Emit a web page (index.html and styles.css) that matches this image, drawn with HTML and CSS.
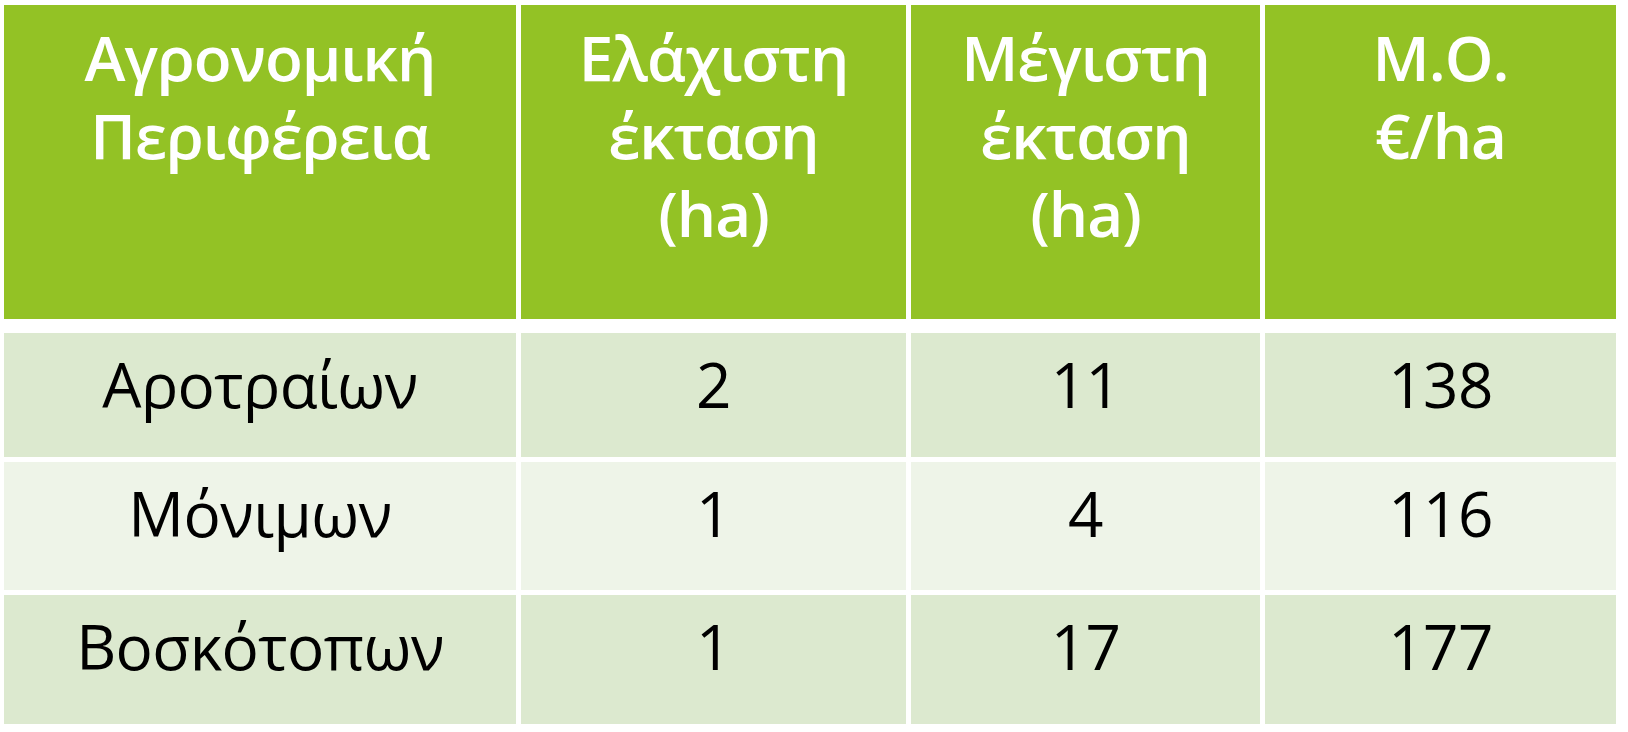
FILE: index.html
```html
<!DOCTYPE html>
<html lang="el">
<head>
<meta charset="utf-8">
<title>Πίνακας</title>
<link rel="stylesheet" href="styles.css">
</head>
<body>
<table class="data">
  <colgroup>
    <col class="c1"><col class="c2"><col class="c3"><col class="c4">
  </colgroup>
  <thead>
    <tr>
      <th>Αγρονομική<br>Περιφέρεια</th>
      <th>Ελάχιστη<br>έκταση<br>(ha)</th>
      <th>Μέγιστη<br>έκταση<br>(ha)</th>
      <th>Μ.Ο.<br>€/ha</th>
    </tr>
  </thead>
  <tbody>
    <tr class="band r1"><td>Αροτραίων</td><td>2</td><td>11</td><td>138</td></tr>
    <tr class="light r2"><td>Μόνιμων</td><td>1</td><td>4</td><td>116</td></tr>
    <tr class="band r3"><td>Βοσκότοπων</td><td>1</td><td>17</td><td>177</td></tr>
  </tbody>
</table>
</body>
</html>
```

FILE: styles.css
```css
html, body {
  margin: 0;
  padding: 0;
  background: #ffffff;
}
.data {
  border-collapse: separate;
  border-spacing: 5px;
  margin: 0 0 0 -1px;
  font-family: "Open Sans", "DejaVu Sans", sans-serif;
  table-layout: fixed;
}
.c1 { width: 512px; }
.c2 { width: 385px; }
.c3 { width: 349px; }
.c4 { width: 351px; }
.data th {
  background: #93c225;
  color: #ffffff;
  font-weight: 600;
  font-size: 62px;
  line-height: 78px;
  letter-spacing: -1px;
  height: 323px;
  box-sizing: border-box;
  vertical-align: top;
  text-align: center;
  padding: 13px 0 0 0;
  border-bottom: 9px solid #ffffff;
}
.data td {
  font-size: 62px;
  line-height: 78px;
  letter-spacing: -0.6px;
  color: #000000;
  text-align: center;
  vertical-align: top;
  padding: 12px 0 0 0;
  box-sizing: border-box;
}
.r1 td { height: 124px; }
.r2 td { height: 128px; }
.r3 td { height: 129px; }
.band td { background: #dce9cf; }
.light td { background: #eef4e8; }
```
